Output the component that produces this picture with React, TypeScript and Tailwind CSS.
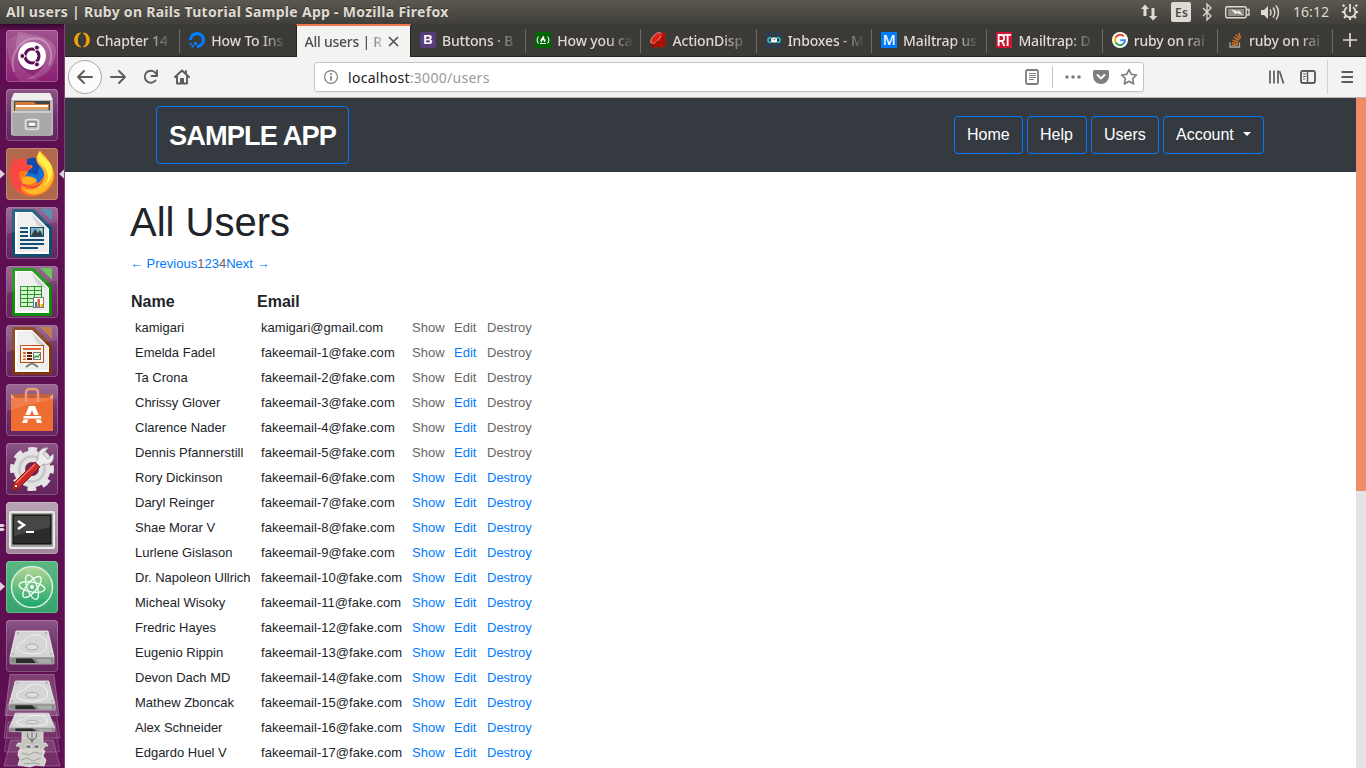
import React from "react";

type LinkFlags = { show: boolean; edit: boolean; destroy: boolean };
type User = { name: string; email: string } & LinkFlags;

const names = [
  "kamigari", "Emelda Fadel", "Ta Crona", "Chrissy Glover", "Clarence Nader", "Dennis Pfannerstill",
  "Rory Dickinson", "Daryl Reinger", "Shae Morar V", "Lurlene Gislason", "Dr. Napoleon Ullrich",
  "Micheal Wisoky", "Fredric Hayes", "Eugenio Rippin", "Devon Dach MD", "Mathew Zboncak",
  "Alex Schneider", "Edgardo Huel V",
];

const users: User[] = names.map((name, i) => ({
  name,
  email: i === 0 ? "kamigari@gmail.com" : `fakeemail-${i}@fake.com`,
  show: i > 5,
  edit: i !== 0 && i !== 2,
  destroy: i > 5,
}));

/* ---------- launcher ---------- */

function Tile({ bg, children }: { bg: string; children: React.ReactNode }) {
  return (
    <div className={`h-[52px] w-[52px] shrink-0 overflow-hidden rounded-[4px] shadow-[inset_0_0_0_1px_rgba(255,255,255,0.22)] ${bg}`}>
      <svg width="52" height="52" viewBox="0 0 52 52">{children}</svg>
    </div>
  );
}

const glass = "bg-linear-to-b from-[#8d5487] via-[#70336a] to-[#65235d]";

function Shine() {
  return <path d="M1 1H51V15C35 17 18 22 1 27Z" fill="#fff" opacity=".12" />;
}

function Drive() {
  return (
    <g>
      <path d="M10 11H42L48 37H4Z" fill="#d5d5d5" stroke="#f2f2f2" strokeWidth=".8" />
      <path d="M4 37H48V43Q48 44 47 44H5Q4 44 4 43Z" fill="#8a8a8a" stroke="#bbb" strokeWidth=".8" />
      <path d="M10 38.500H26L30 43H10Z" fill="#2a2a2a" />
      <path d="M30 39H45V43H33Z" fill="#aaa" />
      <ellipse cx="26" cy="27" rx="6" ry="3" fill="#dedede" stroke="#a4a4a4" strokeWidth=".9" />
      <path d="M11 28C13 34 34 37 40 29C43 21 37 14 27 15C22 15 22 18 18 21C15 23 10 24 11 28Z" fill="none" stroke="#f2f2f2" strokeWidth="1" />
      <circle cx="12" cy="13" r=".8" fill="#888" /><circle cx="40" cy="13" r=".8" fill="#888" />
      <circle cx="7" cy="34" r=".8" fill="#888" /><circle cx="45" cy="34" r=".8" fill="#888" />
    </g>
  );
}

function DocShape({ color, light }: { color: string; light: string }) {
  return (
    <g>
      <path d="M8 2H28L46 20V48Q46 50 44 50H8Q6 50 6 48V4Q6 2 8 2Z" fill={color} />
      <path d="M34 2H45Q46 2 46 4V14Z" fill={light} />
      <path d="M9 5H26L43 22V47H9Z" fill="#fff" />
      <path d="M11 6H25L42 23V45H11Z" fill="#eee" />
      <path d="M25 6L42 23L31 18Z" fill="#cfcfcf" />
    </g>
  );
}

function Launcher() {
  return (
    <aside className="relative flex h-[744px] w-[65px] shrink-0 flex-col gap-[7px] overflow-hidden border-r border-[#83437c] bg-[#5e0f51] pl-[6px] pt-[6px]">
      <div className="absolute left-0 top-0 h-[6px] w-full bg-linear-to-b from-[#34072e] to-transparent" />
      <Tile bg="bg-linear-to-b from-[#a1528f] to-[#8c1d73]">
        <path d="M8 42C2 24 16 6 34 9C44 12 48 25 43 35" fill="none" stroke="#fff" strokeOpacity=".28" strokeWidth="2" />
        <path d="M12 1C20 5 46 3 50 20C50 38 38 50 20 49C34 43 42 34 38 24C34 12 20 9 9 20Z" fill="#fff" opacity=".16" />
        <path d="M1 12C8 4 18 4 29 8C17 10 10 18 12 30C14 42 28 44 34 51H13C5 40 2 28 1 12Z" fill="#fff" opacity=".1" />
        <circle cx="26" cy="27" r="14" fill="#000" opacity=".15" />
        <circle cx="26" cy="26" r="14" fill="#fff" />
        <circle cx="26" cy="26" r="7" fill="none" stroke="#5e0f51" strokeWidth="3" strokeDasharray="13.66 1" strokeDashoffset="7" />
        <g fill="#5e0f51" stroke="#fff" strokeWidth="1"><circle cx="16.3" cy="26" r="2.5" /><circle cx="30.9" cy="17.6" r="2.5" /><circle cx="30.9" cy="34.4" r="2.5" /></g>
      </Tile>
      <Tile bg={glass}>
        <path d="M8 4H44L47 13V46H5V13Z" fill="#bcbcbc" />
        <path d="M8 4H44L47 11H5Z" fill="#ededed" />
        <path d="M8 12H44V22H8Z" fill="#444" />
        <path d="M9 13H28L30 15H43V20H9Z" fill="#da7835" />
        <path d="M10 16H42V18H10Z" fill="#fff" />
        <path d="M9 18H42V22H9Z" fill="#ef9b4e" />
        <path d="M6.500 22H10L12 20H42L44 22H45.500V47H6.500Z" fill="#a9a9a9" />
        <path d="M6.500 22H45.500V24H6.500Z" fill="#ccc" />
        <rect x="19.5" y="30.500" width="13" height="10" rx="2" fill="#b8b8b8" stroke="#e2e2e2" strokeWidth="1.500" />
        <rect x="22" y="33" width="8" height="4.500" fill="#f5f5f5" stroke="#666" />
      </Tile>
      <Tile bg="bg-[#b1684b]">
        <circle cx="26" cy="25" r="14" fill="#1270d8" />
        <path d="M20 12C26 8 33 10 35 15L31 27L21 24Z" fill="#1649ae" />
        <path d="M34 3C35 8 46 13 48 24C50 38 39 48 26 48C13 48 4 38 4 27C4 19 7 13 10 8L11 13C14 10 18 10 21 12C20 15 20 17 24 17C28 17 27 20 24 21C21 23 21 29 17 30C21 36 27 31 31 33C28 38 36 34 38 27C39 20 33 18 31 14C29 10 31 6 34 3Z" fill="#ff7b1e" />
        <path d="M34 3C31 8 30 13 34 18C43 26 36 39 25 38C17 38 11 31 14 23L21 23C27 21 25 17 22 17C20 16 20 13 21 12C18 10 14 10 11 13L10 8C6 13 3 20 4 29C6 42 17 49 29 47C14 48 13 39 16 37C28 43 38 39 42 32C48 24 39 13 34 3Z" fill="#f73b4c" opacity=".83" />
        <path d="M34 3C30 8 29 14 34 18C42 26 38 36 30 40C24 43 19 41 16 39C20 48 33 49 41 41C54 28 46 14 34 3Z" fill="#ffb928" />
        <path d="M34 3C30 8 31 13 36 17C43 22 44 31 38 38C45 34 48 24 45 17C42 11 35 9 34 3Z" fill="#fff04d" />
        <path d="M16 30C20 28 23 28 26 29C29 30 30 31 31 32C28 36 22 38 16 35Z" fill="#ffad21" />
      </Tile>
      <Tile bg={glass}>
        <DocShape color="#104e72" light="#4383a3" />
        <g fill="#104e72"><path d="M14 20H22V22H14zM14 24H22V26H14zM14 28H22V30H14zM14 32H38V34H14zM14 36H38V38H14zM14 40H32V42H14z" /><rect x="24" y="20" width="14" height="10" /></g>
        <rect x="25" y="21" width="12" height="8" fill="#75b8d9" /><path d="M25 29L29 22L32 26L34 23L37 29Z" fill="#354043" /><circle cx="35" cy="22.500" r="1.2" fill="#f7d84b" /><Shine />
      </Tile>
      <Tile bg={glass}>
        <DocShape color="#138b0b" light="#58bd46" />
        <rect x="14" y="20" width="22" height="21" fill="#249621" />
        <g fill="#d7f3d1"><path d="M15 21H21V24H15zM22 21H28V24H22zM29 21H35V24H29zM15 25H21V28H15zM22 25H28V28H22zM29 25H35V28H29zM15 29H21V32H15zM22 29H28V32H22zM29 29H35V32H29zM15 33H21V36H15zM22 33H28V36H22zM15 37H21V40H15zM22 37H28V40H22z" /></g>
        <rect x="27.500" y="31.500" width="10" height="10" fill="#fff" stroke="#777" /><path d="M29 36H31V41H29Z" fill="#188bc2" /><path d="M31.500 33H34V41H31.500Z" fill="#e76025" /><path d="M34.500 38H37V41H34.500Z" fill="#e8b817" /><Shine />
      </Tile>
      <Tile bg={glass}>
        <DocShape color="#813710" light="#b96b3c" />
        <path d="M26 38L20 42M26 38L32 42" stroke="#777" strokeWidth="2" />
        <rect x="14.500" y="20.500" width="23" height="17" fill="#fff4ec" stroke="#b84a16" />
        <path d="M17 23H35V25H17zM17 27H20V29H17zM17 30.500H20V32H17zM17 33.500H20V35H17z" fill="#d66a36" />
        <path d="M21 27H26V29H21zM21 30H26V32H21zM21 33H26V35H21z" fill="#5d240c" />
        <rect x="27.500" y="27.500" width="7" height="7" fill="#eef5eb" stroke="#777" /><path d="M28 33L30 31L32 32L34 29" fill="none" stroke="#269b28" strokeWidth="1.300" /><Shine />
      </Tile>
      <Tile bg={glass}>
        <path d="M5 10H47V16H5Z" fill="#bd4c20" /><path d="M5 14H47V47H5Z" fill="#ef6d31" /><path d="M5 10L9 14H5zM47 10L43 14H47z" fill="#f4a277" />
        <path d="M20 18V9Q20 5 24 5H28Q32 5 32 9V18" fill="none" stroke="#e98a60" strokeWidth="2.500" />
        <path d="M23 22H29L36 39H31L26 26L21 39H16Z" fill="#fff" /><path d="M17 31.500H34Q36 31.500 36 34V35H17Z" fill="#fff" stroke="#ef6d31" strokeWidth="1" /><Shine />
      </Tile>
      <Tile bg={glass}>
        <circle cx="26" cy="26" r="18.500" fill="#e2e2e2" />
        <circle cx="26" cy="26" r="19" fill="none" stroke="#e4e4e4" strokeWidth="6" strokeDasharray="8.500 6.420" strokeDashoffset="4.250" />
        <circle cx="26" cy="26" r="12.500" fill="none" stroke="#c6c6c6" strokeWidth="2.500" />
        <circle cx="26" cy="26" r="7" fill="#69295f" />
        <path d="M32 16C31 9 36 4 42 5L37 11L42 16L47 11C49 18 44 23 37 21L34 24L29 20Z" fill="#ececec" stroke="#aaa" />
        <path d="M29 19L34 24L14 44C9 50 3 45 8 40Z" fill="#c92b28" stroke="#8d1513" /><path d="M29 21L10 40" stroke="#ef7065" strokeWidth="1.500" /><circle cx="10" cy="43" r="1.800" fill="#fff" stroke="#8d1513" />
      </Tile>
      <Tile bg="bg-linear-to-b from-[#b8a3b5] to-[#9f889c]">
        <rect x="3" y="9" width="46" height="38" rx="2" fill="#e9e9e6" /><rect x="5" y="11" width="42" height="34" fill="#a2a29e" /><rect x="7" y="13" width="38" height="29" fill="#2b2d2b" stroke="#050505" />
        <path d="M8 14H44V25L8 34Z" fill="#444744" />
        <path d="M12 19L18 23L12 27" fill="none" stroke="#fff" strokeWidth="2.400" /><path d="M20 30H28" stroke="#fff" strokeWidth="2.200" />
      </Tile>
      <Tile bg="bg-linear-to-b from-[#5ab783] to-[#35a369]">
        <defs><linearGradient id="atomFill" x1="0" y1="0" x2="0" y2="1"><stop offset="0" stopColor="#b5d794" /><stop offset="1" stopColor="#18a66c" /></linearGradient></defs>
        <circle cx="26" cy="26" r="20.500" fill="url(#atomFill)" stroke="#d9efe1" strokeWidth="1.500" />
        <g fill="none" stroke="#f2fff7" strokeWidth="1.300"><ellipse cx="26" cy="26" rx="13" ry="5" transform="rotate(10 26 26)" /><ellipse cx="26" cy="26" rx="13" ry="5" transform="rotate(70 26 26)" /><ellipse cx="26" cy="26" rx="13" ry="5" transform="rotate(130 26 26)" /></g><circle cx="26" cy="26" r="1.900" fill="#fff" />
      </Tile>
      <Tile bg={glass}><Drive /></Tile>
      <svg className="-mt-[5px] ml-[-6px] shrink-0" width="64" height="94" viewBox="0 0 64 94">
        <path d="M11 66H53L60 92H4Z" fill="#fff" fillOpacity=".14" stroke="#fff" strokeOpacity=".25" />
        <path d="M8 48H55L59.500 78H4.500Z" fill="#fff" fillOpacity=".08" stroke="#fff" strokeOpacity=".2" />
        <path d="M19 76L25 73L31 76L39 74L45 77L43 82L46 86L44 92L36 91L30 93L18 91L20 85L18 81Z" fill="#d3d3cd" stroke="#eee" strokeWidth=".8" />
        <path d="M22 79L29 81L34 78L42 80M21 86L27 84L33 87L41 84M24 90L32 89L40 90" stroke="#a2a29c" fill="none" />
        <path d="M22 55H43V69H46L48 72H45L43 76H21L19 72H16L18 69H22Z" fill="#c6c6c0" stroke="#e3e3df" strokeWidth=".8" />
        <path d="M32 56V69M27.500 59V63L32 67L36.500 63V59" stroke="#777" fill="none" strokeWidth="1.200" />
        <path d="M26 71H31V74.500H26zM34 71H39V74.500H34z" fill="#777" stroke="#eee" strokeWidth=".7" />
        <path d="M8 30H55L60 64H4Z" fill="#fff" fillOpacity=".08" stroke="#fff" strokeOpacity=".22" />
        <g transform="translate(5 33) scale(1.040 .560)"><Drive /></g>
        <path d="M10 .5H54L59 41.500H5Z" fill="#fff" fillOpacity=".2" stroke="#fff" strokeOpacity=".25" />
        <g transform="translate(5 -2.700) scale(1.040 .880)"><Drive /></g>
      </svg>
      <svg className="absolute left-0 top-0" width="64" height="744" viewBox="0 24 64 744" fill="#dcd3da">
        <path d="M0 169.500L5 174L0 178.500zM64 169.500L59 174L64 178.500zM0 582L5 586.500L0 591z" />
        <path d="M0 524H3L5 525.500L3 527H0zM0 528H3L5 529.500L3 531H0z" />
      </svg>
    </aside>
  );
}

/* ---------- browser chrome ---------- */

function Favicon({ kind }: { kind: string }) {
  const p = { width: 16, height: 16, viewBox: "0 0 16 16", className: "shrink-0" };
  switch (kind) {
    case "chapter":
      return <svg {...p} fill="#f0a30a"><path d="M6.800 .6C-2 1.500-2 14.500 6.800 15.400V14.600C2.800 12.500 2.800 3.500 6.800 1.400Z" /><path d="M9.200 .6C18 1.500 18 14.500 9.200 15.400V14.600C13.200 12.500 13.200 3.500 9.200 1.400Z" /></svg>;
    case "ocean":
      return <svg {...p} fill="#0080ff"><path d="M8 16V12.900C11.300 12.900 13.800 9.700 12.600 6.300A4.600 4.600 0 0 0 9.800 3.500C6.400 2.200 3.100 4.700 3.100 8H0C0 2.800 5.100-1.300 10.600.4A7.800 7.800 0 0 1 15.600 5.500C17.300 10.900 13.300 16 8 16Z" /><path d="M5 10H8V13H5zM2.600 13H5V15.400H2.600zM.6 11H2.600V13H.6z" /></svg>;
    case "bootstrap":
      return <span className="flex size-4 shrink-0 items-center justify-center rounded-[2px] bg-[#563d7c] font-['Liberation_Sans'] text-[13px] font-bold leading-4 text-white">B</span>;
    case "fcc":
      return <svg {...p}><path d="M0 0H16V16H0z" fill="#006400" /><path d="M3.500 4.500Q.8 8 3.500 11.500M12.500 4.500Q15.200 8 12.500 11.500" fill="none" stroke="#e9f5e9" strokeWidth="1.100" /><path d="M8 3.500C8 6 5 6.500 5.500 9C5.700 10 6.500 10.500 7 10.500C6.300 9 8 8.500 8 7.500C8.500 8.500 9.500 9 9 10.500C11 9.500 11 8 10 6.800C9.800 7.500 9.500 7.500 9.300 7C9.700 5.500 9 4.200 8 3.500ZM5 11H11V12H5z" fill="#fff" /></svg>;
    case "ruby":
      return <svg {...p}><path d="M11 .3L15.500 1L15.700 14.500L2.500 15.700L.3 10.500L3 4.500Z" fill="#b51207" /><path d="M3 4.500C6 1 9.500-.5 11 1.500S9.500 7 6.500 9.500S1 12 .8 10S1.500 6.500 3 4.500Z" fill="#df2417" stroke="#f4bfb8" strokeWidth=".8" /><path d="M7 9.500L14.500 12L11 1.500M2 11L3 15L6.500 9.500L9 15" fill="none" stroke="#820b04" strokeWidth=".7" /></svg>;
    case "inbox":
      return <svg {...p}><path d="M0 0H16V16H0z" fill="#2f3c4b" /><path d="M5 5.500Q.5 6 2.500 10L5 10.500M11 5.500Q15.500 6 13.500 10L11 10.500" fill="none" stroke="#22cfd2" strokeWidth="1.500" /><rect x="5" y="5.500" width="6" height="5" rx="1" fill="#fff" /><path d="M5.500 6L8 8L10.500 6" fill="none" stroke="#445" strokeWidth=".6" /></svg>;
    case "m":
      return <span className="flex size-4 shrink-0 items-center justify-center bg-[#007bff] font-['Noto_Sans'] text-[14px] font-medium leading-4 text-white">M</span>;
    case "rt":
      return <span className="flex size-4 shrink-0 items-center justify-center bg-[#cc1634] font-['Liberation_Sans'] text-[14px] font-bold leading-4 tracking-[-2px] text-white"><span className="-ml-[2px] scale-x-85 scale-y-120">RT</span></span>;
    case "google":
      return <svg {...p}><circle cx="8" cy="8" r="8" fill="#fff" /><g fill="none" strokeWidth="2.100"><path d="M11.800 4.300A5 5 0 0 0 3.600 5.700" stroke="#ea4335" /><path d="M3.600 5.700A5 5 0 0 0 3.600 10.300" stroke="#fbbc05" /><path d="M3.600 10.300A5 5 0 0 0 11.200 12" stroke="#34a853" /><path d="M11.200 12A5 5 0 0 0 13 8.200H8.200" stroke="#4285f4" /></g></svg>;
    default:
      return <svg {...p} fill="none"><path d="M3 10.500V15H12.500V10.500" stroke="#aaa" strokeWidth="1.300" /><path d="M4.800 13H10.800M4.900 10.700L10.900 11.300M5.400 8L11.100 9.800M6.800 5.200L11.700 8.400M9 2.700L12.600 7.200M11.800 1L13.600 6.200" stroke="#e87922" strokeWidth="1.300" /></svg>;
  }
}

const tabs = [
  { kind: "chapter", text: "Chapter 14" },
  { kind: "ocean", text: "How To Ins" },
  { kind: "active", text: "All users | R" },
  { kind: "bootstrap", text: "Buttons · B" },
  { kind: "fcc", text: "How you ca" },
  { kind: "ruby", text: "ActionDisp" },
  { kind: "inbox", text: "Inboxes - M" },
  { kind: "m", text: "Mailtrap us" },
  { kind: "rt", text: "Mailtrap: D" },
  { kind: "google", text: "ruby on rai" },
  { kind: "stack", text: "ruby on rai" },
];

function TitleBar() {
  return (
    <header className="flex h-6 items-center justify-between bg-linear-to-b from-[#5b584f] to-[#403f3a] pl-[6px] pr-[7px] text-[#dfdbd2]">
      <span className="whitespace-nowrap text-[14px] font-bold leading-6 tracking-[0.290px] [text-shadow:0_-1px_0_#333]">All users | Ruby on Rails Tutorial Sample App - Mozilla Firefox</span>
      <svg width="226" height="24" viewBox="1133 0 226 24" fill="none" stroke="#dfdbd2">
        <path d="M1141 9L1145 4.500L1149 9H1146.500V16H1143.500V9ZM1149 16H1151.500V8H1154.500V16H1157.500L1153 20.500Z" fill="#dfdbd2" stroke="none" />
        <rect x="1171" y="2" width="20" height="20" rx="2" fill="#dfdbd2" stroke="none" />
        <text x="1175" y="17" fill="#4a4842" stroke="none" fontSize="12" fontWeight="600" textLength="13">Es</text>
        <path d="M1203 8L1211 16L1207 20V4L1211 8L1203 16" strokeWidth="1.300" />
        <rect x="1225.700" y="6.700" width="20.500" height="11" rx="1.500" strokeWidth="1.400" /><path d="M1228 9H1244V16H1228z" fill="#8e8b84" stroke="none" /><path d="M1247 9.500H1249V15H1247" strokeWidth="1.300" /><path d="M1231 9L1238 11.500L1238.500 10L1243 15L1236 13L1235.500 14.500Z" fill="#eee" stroke="none" />
        <path d="M1261 10H1264L1268 6V19L1264 15H1261Z" fill="#dfdbd2" stroke="none" /><path d="M1270 9.500Q1272 12.500 1270 15.500M1273 7.500Q1276.500 12.500 1273 17.500M1276 5.500Q1281 12.500 1276 19.500" strokeWidth="1.400" />
        <text x="1293" y="17" fill="#dfdbd2" stroke="none" fontSize="14" textLength="36">16:12</text>
        <path d="M1347 7.200A5.500 5.500 0 1 0 1353 7.200M1350 4V12" strokeWidth="1.900" /><path d="M1344.500 6.500L1342.800 4.800M1355.500 6.500L1357.200 4.800M1344.500 12H1342M1355.500 12H1358M1346 16L1344 18M1354 16L1356 18M1350 18V20" strokeWidth="2.200" />
      </svg>
    </header>
  );
}

function TabStrip() {
  return (
    <div className="flex h-[33px] shrink-0 border-b border-[#252422] bg-[#3b3a36]">
      {tabs.map((t, i) =>
        t.kind === "active" ? (
          <div key={i} className="-mb-px flex h-[33px] w-[115.300px] shrink-0 items-center border-x border-t-2 border-x-[#252422] border-t-[#f0764d] bg-[#f4f3f2] pl-[8px] pr-[11px] text-[#4c4c4c]">
            <span className="w-[78px] shrink-0 whitespace-nowrap text-[14px] font-medium tracking-[-0.250px] mask-[linear-gradient(to_right,black_62px,transparent_82px)]">{t.text}</span>
            <svg className="ml-[5px] shrink-0" width="11" height="11" viewBox="0 0 11 11" stroke="#555" strokeWidth="1.700"><path d="M1 1L10 10M10 1L1 10" /></svg>
          </div>
        ) : (
          <div key={i} className="relative flex h-8 w-[115.300px] shrink-0 items-center gap-[6px] pl-[9px]">
            <Favicon kind={t.kind} />
            <span className="w-[78px] whitespace-nowrap text-[14px] font-medium tracking-[-0.150px] text-[#dfdbd2] mask-[linear-gradient(to_right,black_50px,transparent_77px)]">{t.text}</span>
            {i !== 1 && <span className="absolute right-0 top-[5px] h-6 w-px bg-[#6b6a66]" />}
          </div>
        ),
      )}
      <div className="flex flex-1 items-center justify-center">
        <svg width="14" height="14" viewBox="0 0 14 14" stroke="#dfdbd2" strokeWidth="1.700"><path d="M7 0V14M0 7H14" /></svg>
      </div>
    </div>
  );
}

function Toolbar() {
  return (
    <div className="flex h-[41px] shrink-0 items-center border-b border-[#b9b7b4] bg-[#f4f3f2] text-[#5c5c5b]">
      <svg width="135" height="40" viewBox="65 57 135 40" fill="none" stroke="currentColor" strokeWidth="1.900" strokeLinecap="round" strokeLinejoin="round">
        <circle cx="85" cy="77" r="16.500" fill="#fcfcfc" stroke="#aaa8a6" strokeWidth="1" />
        <path d="M92 77H78M84 71L78 77L84 83M111 77H125M119 71L125 77L119 83" />
        <path d="M155.500 80.500A6 6 0 1 1 155 72.500L157 75" /><path d="M157 70.500V76H151.500" />
        <path d="M175 77L182 70.500L189 77M177 76V83.500H187V76M186 74V71" /><path d="M180.500 83V78.500H183.500V83" fill="currentColor" strokeWidth="1" />
      </svg>
      <div className="ml-[114px] flex h-[30px] w-[830px] items-center rounded-[3px] border border-[#c6c4c1] bg-white shadow-[0_1px_2px_rgba(0,0,0,0.06)]">
        <svg className="ml-[9px]" width="14" height="14" viewBox="0 0 14 14" fill="none" stroke="#777"><circle cx="7" cy="7" r="6.400" strokeWidth="1.100" /><path d="M7 6V10.500M7 3.300V4.900" strokeWidth="1.600" /></svg>
        <span className="ml-[10px] mt-px text-[14px] leading-5 tracking-[0.290px] text-[#999]"><span className="text-[#222]">localhost</span>:3000/users</span>
        <svg className="ml-auto mr-[5px]" width="116" height="28" viewBox="1022 63 116 28" fill="none" stroke="#7e7e7e">
          <rect x="1026" y="70" width="12" height="14" rx="1.500" strokeWidth="1.800" /><path d="M1029 73.500H1036M1029 75.500H1036M1029 77.500H1036M1029 79.500H1034" />
          <path d="M1052.500 66V88" stroke="#c6c4c1" />
          <g fill="#7e7e7e" stroke="none"><circle cx="1067" cy="77" r="1.800" /><circle cx="1073" cy="77" r="1.800" /><circle cx="1079" cy="77" r="1.800" /><path d="M1094.500 70H1107.500Q1109 70 1109 71.500V76A8 8 0 0 1 1093 76V71.500Q1093 70 1094.500 70Z" /></g>
          <path d="M1097.500 75L1101 78.500L1104.500 75" stroke="#fff" strokeWidth="1.900" strokeLinecap="round" />
          <path d="M1129 69.500L1131.300 74.400L1136.500 75L1132.600 78.700L1133.700 84L1129 81.300L1124.300 84L1125.400 78.700L1121.500 75L1126.700 74.400Z" strokeWidth="1.600" strokeLinejoin="round" />
        </svg>
      </div>
      <svg className="ml-auto" width="106" height="40" viewBox="1260 57 106 40" fill="none" stroke="currentColor">
        <path d="M1270 70.500V83.500M1274 70.500V83.500M1278 70.500V83.500" strokeWidth="1.700" /><path d="M1279.500 71L1283.500 83.500" strokeWidth="1.700" />
        <rect x="1301" y="71" width="14" height="12" rx="2" strokeWidth="1.900" /><path d="M1307.500 71V83" strokeWidth="1.500" /><path d="M1303 74H1306M1303 76.500H1306M1303 79H1305" />
        <path d="M1327.500 60V94" stroke="#d5d3d1" /><path d="M1341.500 72H1353M1341.500 77H1353M1341.500 82H1353" strokeWidth="1.800" />
      </svg>
    </div>
  );
}

/* ---------- web page ---------- */

function NavButton({ children, width }: { children: React.ReactNode; width: string }) {
  return <a className={`flex h-[38px] items-center whitespace-nowrap rounded-[4px] border border-[#007bff] pl-3 text-[16px] text-white ${width}`}>{children}</a>;
}

function ActionLink({ active, children }: { active: boolean; children: string }) {
  return <a className={active ? "text-[#007bff]" : "text-[#666]"}>{children}</a>;
}

function Page() {
  return (
    <main className="min-w-0 flex-1 bg-white font-['Liberation_Sans',Arial,sans-serif] text-[#212529]">
      <nav className="flex h-[74px] items-center justify-between bg-[#343a40] pl-[91px] pr-[92px]">
        <a className="flex h-[58px] w-[193px] items-center whitespace-nowrap rounded-[4px] border border-[#007bff] pl-[12px] pt-[2px] text-[27.200px] font-bold tracking-[-0.880px] text-white">SAMPLE APP</a>
        <div className="flex gap-1">
          <NavButton width="w-[69px]">Home</NavButton>
          <NavButton width="w-[60px]">Help</NavButton>
          <NavButton width="w-[68px]">Users</NavButton>
          <NavButton width="w-[101px]">Account<span className="ml-[9px] mt-[-2px] border-x-[4.500px] border-t-[4.500px] border-x-transparent border-t-white" /></NavButton>
        </div>
      </nav>
      <h1 className="pl-[65px] pt-[26px] text-[40px] leading-[48px]">All Users</h1>
      <div className="whitespace-pre pl-[65px] pt-[8px] text-[13px] leading-5 text-[#007bff]">← Previous<span className="text-[#666]">1</span>23<span className="text-[#666]">4</span>Next →</div>
      <table className="ml-[66px] mt-[15px] table-fixed border-collapse text-left text-[13px]">
        <colgroup><col className="w-[126px]" /><col className="w-[151px]" /><col className="w-[42px]" /><col className="w-[33px]" /><col className="w-[60px]" /></colgroup>
        <thead>
          <tr className="h-[26px] text-[16px] leading-6"><th>Name</th><th>Email</th><th /><th /><th /></tr>
        </thead>
        <tbody>
          {users.map((u) => (
            <tr key={u.email} className="h-[25px] whitespace-nowrap leading-[25px]">
              <td className="pl-1">{u.name}</td>
              <td className="pl-1 tracking-[0.030px]">{u.email}</td>
              <td className="pl-1"><ActionLink active={u.show}>Show</ActionLink></td>
              <td className="pl-1"><ActionLink active={u.edit}>Edit</ActionLink></td>
              <td className="pl-1"><ActionLink active={u.destroy}>Destroy</ActionLink></td>
            </tr>
          ))}
        </tbody>
      </table>
    </main>
  );
}

export default function App() {
  return (
    <div className="h-[768px] w-[1366px] overflow-hidden bg-white font-['Noto_Sans',sans-serif]">
      <TitleBar />
      <div className="flex h-[744px]">
        <Launcher />
        <div className="flex min-w-0 flex-1 flex-col">
          <TabStrip />
          <Toolbar />
          <div className="flex min-h-0 flex-1 overflow-hidden">
            <Page />
            <div className="w-[10px] shrink-0 bg-[#e4e4e4]"><div className="h-[393px] bg-[#ef8b66]" /></div>
          </div>
        </div>
      </div>
    </div>
  );
}
